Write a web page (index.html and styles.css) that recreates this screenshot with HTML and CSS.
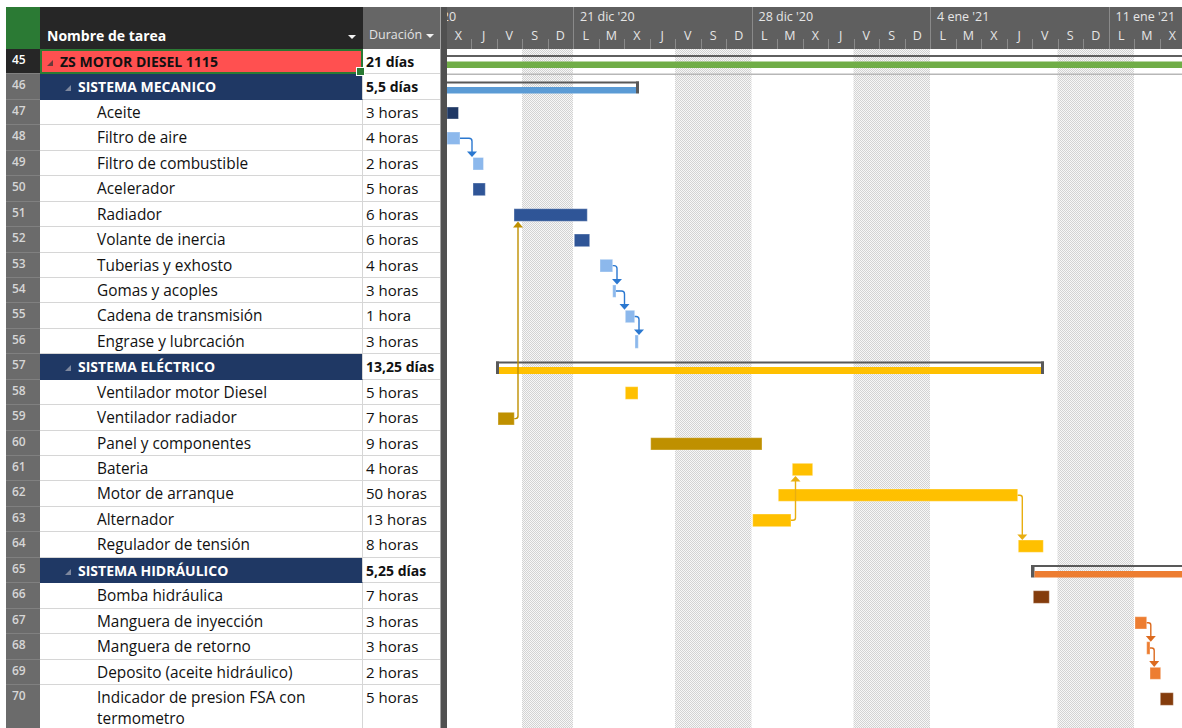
FILE: index.html
```html
<!DOCTYPE html>
<html lang="es">
<head>
<meta charset="utf-8">
<title>ZS Motor Diesel 1115 - Diagrama de Gantt</title>
<link rel="stylesheet" href="styles.css">
</head>
<body>
<div class="app">
  <!-- task sheet -->
  <div class="sheet">
    <div class="sheet-head">
      <div class="corner"></div>
      <div class="h-name"><span>Nombre de tarea</span><i class="caret"></i></div>
      <div class="h-dur"><span class="h-label">Duración</span><i class="caret"></i></div>
    </div>

    <div class="row sel">
      <div class="num">45</div>
      <div class="name project"><svg class="tri" viewBox="0 0 6 6"><polygon points="6,0 6,6 0,6"/></svg>ZS MOTOR DIESEL 1115</div>
      <div class="dur b">21 días</div>
    </div>
    <div class="row">
      <div class="num">46</div>
      <div class="name sum"><svg class="tri" viewBox="0 0 6 6"><polygon points="6,0 6,6 0,6"/></svg>SISTEMA MECANICO</div>
      <div class="dur b">5,5 días</div>
    </div>
    <div class="row"><div class="num">47</div><div class="name">Aceite</div><div class="dur">3 horas</div></div>
    <div class="row"><div class="num">48</div><div class="name">Filtro de aire</div><div class="dur">4 horas</div></div>
    <div class="row"><div class="num">49</div><div class="name">Filtro de combustible</div><div class="dur">2 horas</div></div>
    <div class="row"><div class="num">50</div><div class="name">Acelerador</div><div class="dur">5 horas</div></div>
    <div class="row"><div class="num">51</div><div class="name">Radiador</div><div class="dur">6 horas</div></div>
    <div class="row"><div class="num">52</div><div class="name">Volante de inercia</div><div class="dur">6 horas</div></div>
    <div class="row"><div class="num">53</div><div class="name">Tuberias y exhosto</div><div class="dur">4 horas</div></div>
    <div class="row"><div class="num">54</div><div class="name">Gomas y acoples</div><div class="dur">3 horas</div></div>
    <div class="row"><div class="num">55</div><div class="name">Cadena de transmisión</div><div class="dur">1 hora</div></div>
    <div class="row"><div class="num">56</div><div class="name">Engrase y lubrcación</div><div class="dur">3 horas</div></div>
    <div class="row">
      <div class="num">57</div>
      <div class="name sum"><svg class="tri" viewBox="0 0 6 6"><polygon points="6,0 6,6 0,6"/></svg>SISTEMA ELÉCTRICO</div>
      <div class="dur b">13,25 días</div>
    </div>
    <div class="row"><div class="num">58</div><div class="name">Ventilador motor Diesel</div><div class="dur">5 horas</div></div>
    <div class="row"><div class="num">59</div><div class="name">Ventilador radiador</div><div class="dur">7 horas</div></div>
    <div class="row"><div class="num">60</div><div class="name">Panel y componentes</div><div class="dur">9 horas</div></div>
    <div class="row"><div class="num">61</div><div class="name">Bateria</div><div class="dur">4 horas</div></div>
    <div class="row"><div class="num">62</div><div class="name">Motor de arranque</div><div class="dur">50 horas</div></div>
    <div class="row"><div class="num">63</div><div class="name">Alternador</div><div class="dur">13 horas</div></div>
    <div class="row"><div class="num">64</div><div class="name">Regulador de tensión</div><div class="dur">8 horas</div></div>
    <div class="row">
      <div class="num">65</div>
      <div class="name sum"><svg class="tri" viewBox="0 0 6 6"><polygon points="6,0 6,6 0,6"/></svg>SISTEMA HIDRÁULICO</div>
      <div class="dur b">5,25 días</div>
    </div>
    <div class="row"><div class="num">66</div><div class="name">Bomba hidráulica</div><div class="dur">7 horas</div></div>
    <div class="row"><div class="num">67</div><div class="name">Manguera de inyección</div><div class="dur">3 horas</div></div>
    <div class="row"><div class="num">68</div><div class="name">Manguera de retorno</div><div class="dur">3 horas</div></div>
    <div class="row"><div class="num">69</div><div class="name">Deposito (aceite hidráulico)</div><div class="dur">2 horas</div></div>
    <div class="row"><div class="num">70</div><div class="name">Indicador de presion FSA con termometro</div><div class="dur">5 horas</div></div>
  </div>

  <div class="split"></div>

  <!-- gantt chart -->
  <div class="chart">
    <div class="scale">
      <div class="weeks">
        <div class="week">14 dic '20</div>
        <div class="week">21 dic '20</div>
        <div class="week">28 dic '20</div>
        <div class="week">4 ene '21</div>
        <div class="week">11 ene '21</div>
      </div>
      <div class="days">
        <div class="day">X</div><div class="day">J</div><div class="day">V</div><div class="day">S</div><div class="day">D</div>
        <div class="day mon">L</div><div class="day">M</div><div class="day">X</div><div class="day">J</div><div class="day">V</div><div class="day">S</div><div class="day">D</div>
        <div class="day mon">L</div><div class="day">M</div><div class="day">X</div><div class="day">J</div><div class="day">V</div><div class="day">S</div><div class="day">D</div>
        <div class="day mon">L</div><div class="day">M</div><div class="day">X</div><div class="day">J</div><div class="day">V</div><div class="day">S</div><div class="day">D</div>
        <div class="day mon">L</div><div class="day">M</div><div class="day">X</div>
      </div>
    </div>

    <svg class="bars" width="735" height="679" viewBox="447 49 735 679">
      <defs>
        <pattern id="nonwork" width="2" height="2" patternUnits="userSpaceOnUse">
          <rect width="2" height="2" fill="#f7f7f7"/>
          <rect width="1" height="1" fill="#d3d3d3"/>
          <rect x="1" y="1" width="1" height="1" fill="#d3d3d3"/>
        </pattern>
      </defs>

      <!-- non-working days -->
      <g fill="url(#nonwork)">
        <rect x="522" y="49" width="51" height="679"/>
        <rect x="675" y="49" width="76.5" height="679"/>
        <rect x="853.5" y="49" width="76.5" height="679"/>
        <rect x="1057.5" y="49" width="76.5" height="679"/>
      </g>

      <!-- project summary -->
      <rect x="447" y="55" width="735" height="2" fill="#5f5f5f"/>
      <rect x="447" y="61.5" width="735" height="6.5" fill="#70ad47"/>
      <rect x="447" y="73.5" width="735" height="1.5" fill="#b7b7b7"/>

      <!-- summary: sistema mecanico -->
      <g fill="#595959">
        <rect x="447" y="81.5" width="192" height="2"/>
        <rect x="636" y="81.5" width="3" height="12"/>
      </g>
      <rect x="447" y="87" width="189" height="6.5" fill="#5b9bd5"/>

      <!-- summary: sistema electrico -->
      <g fill="#595959">
        <rect x="496" y="361.5" width="548" height="2"/>
        <rect x="496" y="361.5" width="3" height="12.5"/>
        <rect x="1041" y="361.5" width="3" height="12.5"/>
      </g>
      <rect x="499" y="367" width="542" height="7" fill="#ffc000"/>

      <!-- summary: sistema hidraulico -->
      <g fill="#595959">
        <rect x="1031" y="565" width="151" height="2"/>
        <rect x="1031" y="565" width="3.5" height="12.5"/>
      </g>
      <rect x="1034.5" y="571" width="147.5" height="6.5" fill="#ed7d31"/>

      <!-- task bars -->
      <g stroke="#ffffff" stroke-opacity="0.35" stroke-width="1">
        <rect x="447" y="107" width="11.5" height="12" fill="#1f3864"/>
        <rect x="447" y="132" width="13" height="12.5" fill="#8cb8ec"/>
        <rect x="473" y="157.5" width="10.5" height="12.5" fill="#8cb8ec"/>
        <rect x="473" y="183" width="12.3" height="12.7" fill="#2f5597"/>
        <rect x="514" y="208.7" width="73.3" height="12.6" fill="#2f5597"/>
        <rect x="574.3" y="234" width="15.4" height="12.7" fill="#2f5597"/>
        <rect x="600" y="259.3" width="12.7" height="12.7" fill="#8cb8ec"/>
        <rect x="612.7" y="285" width="3.3" height="12.3" fill="#8cb8ec"/>
        <rect x="625.3" y="310.3" width="9.4" height="12.4" fill="#8cb8ec"/>
        <rect x="635" y="335" width="3.3" height="13.3" fill="#8cb8ec"/>

        <rect x="625.3" y="386.7" width="12.7" height="12.6" fill="#ffc000"/>
        <rect x="498" y="412.3" width="16.3" height="12.7" fill="#bf9000"/>
        <rect x="650.7" y="437.7" width="111.3" height="12.3" fill="#bf9000"/>
        <rect x="792.3" y="463.3" width="20.4" height="12.4" fill="#ffc000"/>
        <rect x="778.3" y="489" width="239.4" height="12.3" fill="#ffc000"/>
        <rect x="752.7" y="514" width="38.3" height="12.7" fill="#ffc000"/>
        <rect x="1018.3" y="540" width="25" height="12.3" fill="#ffc000"/>

        <rect x="1033.3" y="590.7" width="16" height="12.6" fill="#843c0c"/>
        <rect x="1135" y="616.7" width="11.7" height="12.3" fill="#ed7d31"/>
        <rect x="1146.7" y="641.7" width="3.3" height="12.6" fill="#ed7d31"/>
        <rect x="1150" y="667.3" width="10.7" height="12" fill="#ed7d31"/>
        <rect x="1160.3" y="692.7" width="13" height="12.6" fill="#843c0c"/>
      </g>

      <!-- links -->
      <g fill="none" stroke-width="1.4">
        <path stroke="#2b78d0" d="M460 138.3 H469 q3 0 3 3 V152"/>
        <path stroke="#2b78d0" d="M612.7 265.6 H614 q3 0 3 3 V279.5"/>
        <path stroke="#2b78d0" d="M616 291 H621.5 q3 0 3 3 V304.5"/>
        <path stroke="#2b78d0" d="M634.7 316.5 H636 q3 0 3 3 V330"/>
        <path stroke="#bf9000" d="M514.3 418.6 H515.5 q2.5 0 2.5 -2.5 V227"/>
        <path stroke="#e8ae10" d="M791 520.3 H793 q2.5 0 2.5 -2.5 V481"/>
        <path stroke="#e8ae10" d="M1017.7 495.2 H1019.8 q2.5 0 2.5 2.5 V535"/>
        <path stroke="#dc6a1e" d="M1146.7 622.8 H1148.3 q2.5 0 2.5 2.5 V636.5"/>
        <path stroke="#dc6a1e" d="M1150 648 H1151.7 q2.5 0 2.5 2.5 V661.5"/>
      </g>
      <g>
        <polygon fill="#2b78d0" points="467,151.5 477,151.5 472,157"/>
        <polygon fill="#2b78d0" points="612,279 622,279 617,284.5"/>
        <polygon fill="#2b78d0" points="619.5,304 629.5,304 624.5,309.8"/>
        <polygon fill="#2b78d0" points="634,329.5 644,329.5 639,335"/>
        <polygon fill="#bf9000" points="513,227.5 523,227.5 518,221.5"/>
        <polygon fill="#e8ae10" points="790.5,481.5 800.5,481.5 795.5,476"/>
        <polygon fill="#e8ae10" points="1017.3,534.5 1027.3,534.5 1022.3,540"/>
        <polygon fill="#dc6a1e" points="1145.8,636 1155.8,636 1150.8,641.7"/>
        <polygon fill="#dc6a1e" points="1149.2,661 1159.2,661 1154.2,667"/>
      </g>
    </svg>
  </div>
</div>
</body>
</html>
```

FILE: styles.css
```css
* {
  box-sizing: border-box;
}

html,
body {
  margin: 0;
  background: #ffffff;
}

body {
  font-family: "Open Sans", "Noto Sans", "DejaVu Sans", sans-serif;
  color: #111111;
}

.app {
  display: flex;
  height: 728px;
  padding: 7px 0 0 6px;
  overflow: hidden;
}

/* ---------- task sheet ---------- */

.sheet {
  flex: none;
  width: 434px;
  overflow: hidden;
}

.sheet-head,
.row {
  display: grid;
  grid-template-columns: 34px 323px 77px;
}

.sheet-head {
  height: 42px;
}

.corner {
  background: #2b7a34;
}

.h-name,
.h-dur {
  display: flex;
  align-items: flex-end;
  line-height: 20px;
  white-space: nowrap;
}

.h-name {
  justify-content: space-between;
  background: #262626;
  color: #ffffff;
  font-size: 14px;
  font-weight: 700;
  padding: 0 7px 3px 7px;
}

.h-dur {
  gap: 4px;
  background: #666666;
  color: #e2e2e2;
  font-size: 12.5px;
  padding: 0 0 4px 6px;
}

.h-label {
  flex: none;
}

.caret {
  flex: none;
  display: inline-block;
  width: 0;
  height: 0;
  margin-bottom: 7px;
  border-left: 4.5px solid transparent;
  border-right: 4.5px solid transparent;
  border-top: 4.5px solid #f2f2f2;
}

.row {
  min-height: 25.45px;
}

.num {
  background: #6b6b6b;
  color: #d6d6d6;
  font-size: 12px;
  font-weight: 600;
  line-height: 18px;
  padding: 2px 0 0 6px;
  border-bottom: 1px solid #808080;
}

.name,
.dur {
  font-size: 15px;
  line-height: 21px;
  padding-top: 2px;
  border-bottom: 1px solid #d6d6d6;
}

.name {
  font-size: 15.4px;
  padding-left: 57px;
  padding-right: 4px;
  border-right: 1px solid #d6d6d6;
}

.dur {
  padding-left: 3px;
  white-space: nowrap;
}

.dur.b {
  font-weight: 700;
  font-size: 14px;
}

.tri {
  display: inline-block;
  width: 6px;
  height: 6px;
  margin-right: 7px;
  vertical-align: 1px;
}

.name.sum {
  background: #1f3864;
  color: #ffffff;
  font-weight: 700;
  font-size: 14px;
  padding-left: 25px;
  border-bottom-color: #1f3864;
}

.name.sum .tri {
  fill: #7e889e;
}

.sel .num {
  background: #262626;
  color: #ffffff;
}

.name.project {
  position: relative;
  background: #ff5050;
  color: #111111;
  font-weight: 700;
  font-size: 14px;
  border: 2px solid #2b7a34;
  padding-top: 0;
  padding-left: 5px;
}

.name.project .tri {
  fill: #6a3a3a;
}

/* fill handle of the active cell */
.name.project::after {
  content: "";
  position: absolute;
  right: -4px;
  bottom: -4px;
  width: 7px;
  height: 7px;
  background: #2b7a34;
  border: 1px solid #ffffff;
}

/* ---------- divider ---------- */

.split {
  flex: none;
  width: 7px;
  background: #505050;
  border-left: 1px solid #a3a3a3;
}

/* ---------- gantt chart ---------- */

.chart {
  flex: 1;
  display: flex;
  flex-direction: column;
  overflow: hidden;
}

.scale {
  flex: none;
  height: 42px;
  background: #5f5f5f;
  color: #e6e6e6;
  font-size: 12.5px;
  overflow: hidden;
}

.weeks,
.days {
  display: flex;
}

/* the first week began before the visible range */
.weeks {
  height: 20px;
  margin-left: -52.5px;
}

.week {
  flex: none;
  width: 178.5px;
  padding-left: 6px;
  line-height: 20px;
  white-space: nowrap;
  border-left: 1px solid #8a8a8a;
}

.days {
  height: 22px;
  margin-left: -1.5px;
}

.day {
  flex: none;
  width: 25.5px;
  text-align: center;
  line-height: 18px;
  background: linear-gradient(#8a8a8a, #8a8a8a) 0 100% / 1px 10px no-repeat;
}

.day.mon {
  background: linear-gradient(#8a8a8a, #8a8a8a) 0 0 / 1px 100% no-repeat;
}

.bars {
  display: block;
  flex: none;
}
```
